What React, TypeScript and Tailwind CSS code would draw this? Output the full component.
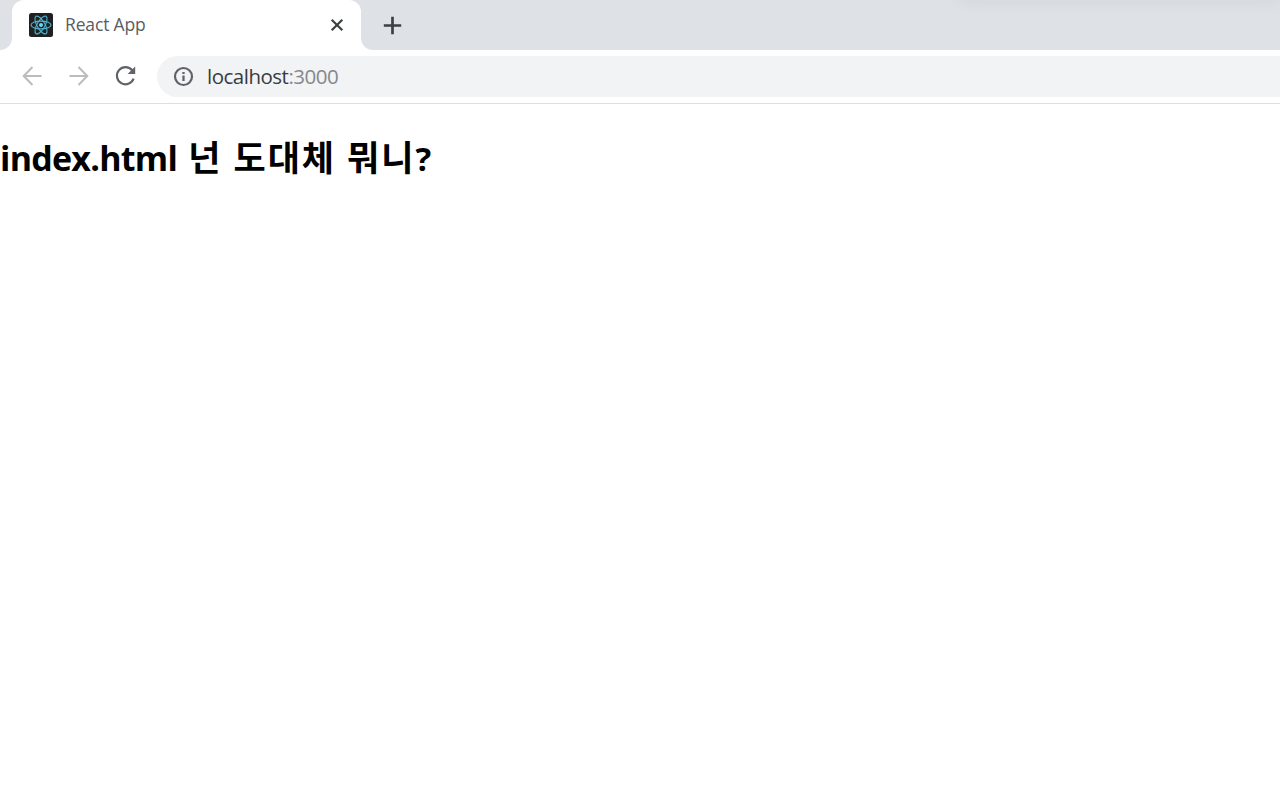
import type { ReactNode } from 'react';

function ReactLogo() {
  return (
    <svg className="shrink-0" width="24" height="24" viewBox="0 0 24 24" fill="none">
      <rect width="24" height="24" rx="2.5" fill="#202022" />
      <g stroke="#4fb3cf" strokeWidth="1.1">
        <ellipse cx="12" cy="12" rx="10" ry="3.9" transform="rotate(0 12 12)" />
        <ellipse cx="12" cy="12" rx="10" ry="3.9" transform="rotate(60 12 12)" />
        <ellipse cx="12" cy="12" rx="10" ry="3.9" transform="rotate(120 12 12)" />
      </g>
      <circle cx="12" cy="12" r="2" fill="#61dafb" />
    </svg>
  );
}

function TabStrip() {
  return (
    <div className="flex h-[50px] bg-white">
      <div className="w-3 rounded-br-xl bg-[#dee1e6]" />

      {/* Active tab */}
      <div className="w-[349px] bg-[#dee1e6]">
        <div className="flex h-full items-center rounded-t-xl bg-white pl-[17px] pr-[17px]">
          <ReactLogo />
          <span className="ml-3 pb-0.5 text-[17.5px] leading-6 tracking-[-0.15px] text-[#5a5d61]">
            React App
          </span>
          <svg className="ml-auto" width="14" height="14" viewBox="0 0 14 14" fill="none">
            <path d="M1.7 1.7 12.3 12.3M12.3 1.7 1.7 12.3" stroke="#3c4043" strokeWidth="2.2" />
          </svg>
        </div>
      </div>

      {/* Rest of the strip */}
      <div className="relative flex flex-1 items-center overflow-hidden rounded-bl-xl bg-[#dee1e6] pl-[22px]">
        <svg width="19" height="19" viewBox="0 0 19 19" fill="none">
          <path d="M9.5 .8v17.4M.8 9.5h17.4" stroke="#3c4043" strokeWidth="2.7" />
        </svg>
        <div className="absolute -top-5 left-[600px] right-0 h-5 shadow-[0_0_18px_rgba(60,64,67,0.08)]" />
      </div>
    </div>
  );
}

function NavIcon({ className, children }: { className: string; children: ReactNode }) {
  return (
    <svg className={className} width="22" height="22" viewBox="0 0 22 22" fill="none" stroke="currentColor">
      {children}
    </svg>
  );
}

function Toolbar() {
  return (
    <div className="flex h-[54px] items-start border-b-[1.5px] border-[#dfdfdf] bg-white pt-1.5">
      <div className="flex h-10 w-[157px] shrink-0 items-center gap-[25px] pl-[21px]">
        <NavIcon className="text-[#babcbe]">
          <path d="M20.5 11H3M11.5 2 2.7 11l8.8 9" strokeWidth="2" />
        </NavIcon>
        <NavIcon className="text-[#babcbe]">
          <path d="M1.5 11H19M10.5 2l8.8 9-8.8 9" strokeWidth="2" />
        </NavIcon>
        <NavIcon className="text-[#5f6368]">
          <path d="M17.2 5.3A8.6 8.6 0 1 0 18.6 13.7" strokeWidth="2.2" />
          <path d="M20.2 1.4V9H12.6Z" fill="currentColor" stroke="none" />
        </NavIcon>
      </div>

      {/* Address bar */}
      <div className="flex h-[41px] flex-1 items-center rounded-l-full bg-[#f1f3f4] pl-4">
        <svg width="21" height="21" viewBox="0 0 21 21" fill="none">
          <circle cx="10.5" cy="10.5" r="8.5" stroke="#5f6368" strokeWidth="2.2" />
          <path d="M10.5 9.5v5.5M10.5 6v2.1" stroke="#5f6368" strokeWidth="2.3" />
        </svg>
        <span className="ml-[13px] pb-0.5 text-[20.5px] leading-7 tracking-[-0.5px] text-[#3a3b3e]">
          localhost<span className="text-[#85888c]">:3000</span>
        </span>
      </div>
    </div>
  );
}

export default function App() {
  return (
    <div className="h-[812px] overflow-hidden bg-white font-['Open_Sans','Noto_Sans_CJK_KR',sans-serif]">
      <TabStrip />
      <Toolbar />
      <main className="pt-7">
        <h1 className="whitespace-nowrap text-[35px] font-bold leading-[52px] text-black">
          <span className="text-[34px] tracking-[-0.75px]">index.html</span>
          <span className="font-semibold tracking-[2px]"> 넌 도대체 뭐니</span>
          <span className="text-[33px]">?</span>
        </h1>
      </main>
    </div>
  );
}
